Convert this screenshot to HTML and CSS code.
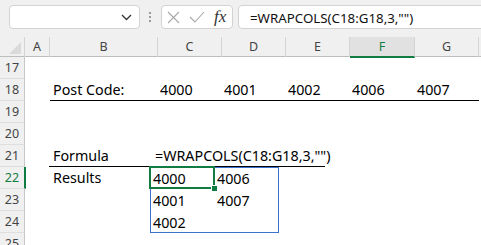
FILE: index.html
```html
<!DOCTYPE html>
<html>
<head>
    <meta name="viewport" content="width=device-width, initial-scale=1">
    <title>WRAPCOLS</title>
    <link rel="stylesheet" href="styles.css">
</head>
<body>

    <div class="toolbar">
        <div class="namebox">
            <svg class="chev" width="11" height="7" viewBox="0 0 11 7"><polyline points="1,1 5.5,5.5 10,1" /></svg>
        </div>
        <div class="grip"><i></i><i></i><i></i></div>
        <div class="fxbox">
            <svg class="cancel" width="13" height="13" viewBox="0 0 13 13"><line x1="1" y1="1" x2="12" y2="12" /><line x1="12" y1="1" x2="1" y2="12" /></svg>
            <svg class="enter" width="16" height="12" viewBox="0 0 16 12"><polyline points="1,6 6,11 15,1" /></svg>
            <span class="fx">fx</span>
        </div>
        <div class="formula">=WRAPCOLS(C18:G18,3,"")</div>
    </div>

    <div class="heads">
        <div class="corner"><span class="tri"></span></div>
        <div class="ch">A</div>
        <div class="ch">B</div>
        <div class="ch">C</div>
        <div class="ch">D</div>
        <div class="ch">E</div>
        <div class="ch active">F</div>
        <div class="ch">G</div>
        <div class="ch last"></div>
    </div>

    <div class="row">
        <div class="rh">17</div>
    </div>

    <div class="row">
        <div class="rh">18</div>
        <div class="cell"></div>
        <div class="cell line label">Post Code:</div>
        <div class="cell line">4000</div>
        <div class="cell line">4001</div>
        <div class="cell line">4002</div>
        <div class="cell line">4006</div>
        <div class="cell line">4007</div>
    </div>

    <div class="row">
        <div class="rh">19</div>
    </div>

    <div class="row">
        <div class="rh">20</div>
    </div>

    <div class="row">
        <div class="rh">21</div>
        <div class="cell"></div>
        <div class="formline">
            <span class="flabel">Formula</span>
            <span class="ftext">=WRAPCOLS(C18:G18,3,"")</span>
        </div>
    </div>

    <div class="lower">
        <div class="rh sel">22</div>
        <div class="rh">23</div>
        <div class="rh">24</div>
        <div class="results">Results</div>
        <div class="spill">
            <div class="sc">4000</div>
            <div class="sc">4006</div>
            <div class="sc">4001</div>
            <div class="sc">4007</div>
            <div class="sc">4002</div>
            <div class="sc"></div>
            <div class="selbox"><span class="handle"></span></div>
        </div>
    </div>

    <div class="row">
        <div class="rh">25</div>
    </div>

</body>
</html>
```

FILE: styles.css
```css
body {
    margin: 0;
    font-family: "Noto Sans", "Open Sans", Arial, sans-serif;
    background-color: #fff;
    overflow: hidden;
}

/* formula bar */
.toolbar {
    display: flex;
    align-items: flex-start;
    height: 37px;
    box-sizing: border-box;
    padding: 5px 0 0 9px;
    background-color: #f0f0f0;
}

.namebox {
    width: 131px;
    height: 24px;
    box-sizing: border-box;
    background-color: #fff;
    border: 1px solid #d3d3d3;
    border-radius: 4px;
    display: flex;
    align-items: center;
    justify-content: flex-end;
    padding-right: 7px;
}

.chev polyline {
    fill: none;
    stroke: #333;
    stroke-width: 1.3;
}

.grip {
    width: 21px;
    display: flex;
    flex-direction: column;
    gap: 2px;
    padding: 7px 0 0 9px;
    box-sizing: border-box;
}

    .grip i {
        display: block;
        width: 2px;
        height: 2px;
        background-color: #9a9a9a;
    }

.fxbox {
    width: 72px;
    height: 24px;
    box-sizing: border-box;
    background-color: #fff;
    border: 1px solid #d3d3d3;
    border-radius: 4px;
    display: flex;
    align-items: center;
    padding-left: 5px;
}

.cancel line, .enter polyline {
    fill: none;
    stroke: #a8a8a8;
    stroke-width: 1.1;
}

.enter {
    margin-left: 9px;
}

.fx {
    margin-left: 9px;
    font-family: "Liberation Serif", "DejaVu Serif", serif;
    font-style: italic;
    font-size: 17px;
    color: #333;
    line-height: 20px;
}

.formula {
    flex: 1;
    margin-left: 5px;
    margin-right: -10px;
    height: 24px;
    box-sizing: border-box;
    background-color: #fff;
    border: 1px solid #d3d3d3;
    border-radius: 4px;
    padding: 1px 0 0 11px;
    font-size: 13.3px;
    line-height: 22px;
    color: #111;
    white-space: nowrap;
}

/* column headers */
.heads, .row {
    display: grid;
    grid-template-columns: 25px 25px 108px 64px 64px 64px 65px 64px 1fr;
}

.heads {
    height: 20px;
    box-sizing: border-box;
    background-color: #f0f0f0;
    border-bottom: 1px solid #bdbdbd;
}

.corner {
    position: relative;
    border-right: 1px solid #d4d4d4;
}

.tri {
    position: absolute;
    right: 3px;
    bottom: 3px;
    width: 0;
    height: 0;
    border-left: 12px solid transparent;
    border-bottom: 12px solid #dadada;
}

.ch {
    border-right: 1px solid #d4d4d4;
    text-align: center;
    font-size: 12.5px;
    line-height: 19px;
    color: #444;
}

    .ch.active {
        background-color: #e1e1e1;
        color: #107c41;
        border-bottom: 2px solid #107c41;
        margin-bottom: -1px;
    }

    .ch.last {
        border-right: none;
    }

/* rows */
.row {
    height: 22px;
}

.rh {
    height: 22px;
    box-sizing: border-box;
    background-color: #f0f0f0;
    border-right: 1px solid #c8c8c8;
    border-bottom: 1px solid #dedede;
    text-align: center;
    font-size: 12.5px;
    line-height: 22px;
    color: #444;
}

    .rh.sel {
        color: #107c41;
        border-right: 2px solid #107c41;
        margin-right: -1px;
    }

.cell {
    font-size: 14.3px;
    line-height: 22px;
    padding-left: 2px;
    white-space: nowrap;
    color: #000;
}

    .cell.label {
        padding-left: 3px;
    }

.line {
    height: 22px;
    box-sizing: border-box;
    border-bottom: 1px solid #000;
}

.formline {
    grid-column: 3 / -1;
    justify-self: start;
    display: flex;
    width: 276px;
    height: 22px;
    box-sizing: border-box;
    border-bottom: 1px solid #000;
    margin-left: -1px;
    font-size: 14.3px;
    line-height: 22px;
    color: #000;
    white-space: nowrap;
}

.flabel {
    flex: none;
    width: 102px;
    padding-left: 4px;
}

.ftext {
    flex: none;
}

/* spilled results */
.lower {
    display: grid;
    grid-template-columns: 25px 125px 129px 1fr;
    grid-template-rows: 22px 22px 22px;
}

    .lower .rh {
        grid-column: 1;
    }

.results {
    grid-column: 2;
    grid-row: 1;
    padding-left: 28px;
    font-size: 14.3px;
    line-height: 22px;
    color: #000;
}

.spill {
    grid-column: 3;
    grid-row: 1 / 4;
    position: relative;
    display: grid;
    grid-template-columns: 64px 64px;
    grid-auto-rows: 22px;
    border: 1px solid #3b72d0;
    box-sizing: border-box;
    height: 66px;
}

.sc {
    font-size: 14.3px;
    line-height: 21px;
    padding-left: 2px;
    color: #000;
}

.selbox {
    position: absolute;
    left: -2px;
    top: -2px;
    width: 66px;
    height: 23px;
    box-sizing: border-box;
    border: 2px solid #107c41;
}

.handle {
    position: absolute;
    right: -4px;
    bottom: -4px;
    width: 5px;
    height: 5px;
    background-color: #107c41;
    border: 1px solid #fff;
    border-right: none;
    border-bottom: none;
}
```
